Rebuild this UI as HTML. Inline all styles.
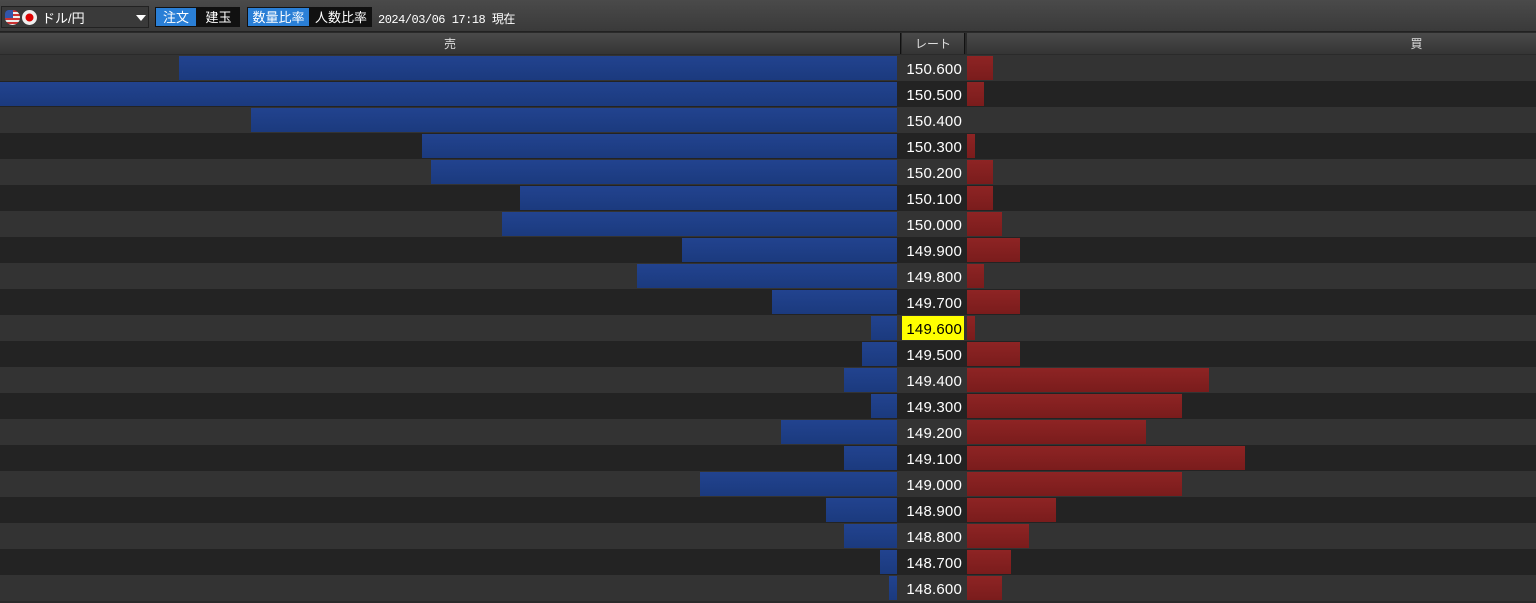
<!DOCTYPE html>
<html><head><meta charset="utf-8"><style>
*{margin:0;padding:0;box-sizing:border-box}
body{width:1536px;height:601px;background:#2a2a2a;font-family:"Liberation Sans","Noto Sans CJK JP",sans-serif;position:relative;overflow:hidden}
.tb{position:absolute;left:0;top:0;width:1536px;height:32px;background:linear-gradient(#4a4a4a,#3a3a3a);border-bottom:1px solid #222}
.sel{position:absolute;left:1px;top:6px;width:148px;height:22px;background:#3a3a3a;border:1px solid #222;color:#fff;font-size:13px}
.btn{position:absolute;top:7px;height:20px;font-size:13px;color:#fff;text-align:center;line-height:19px;border:1px solid #111}
.hd{position:absolute;top:33px;height:21px;background:linear-gradient(#4a4a4a,#353535);color:#ddd;font-size:12px;text-align:center;line-height:23px;border-right:1px solid #111}
.r{position:absolute;left:0;width:1536px;height:26px}
.a{background:#333}.b{background:#232323}
.s{position:absolute;top:1px;height:24px;background:linear-gradient(#22438f,#1b3a7e);}
.u{position:absolute;top:1px;height:24px;left:967px;background:linear-gradient(#8e2424,#7a1c1c)}
.p{position:absolute;left:902px;width:62px;top:1px;height:24px;text-align:right;padding-right:2px;color:#fff;font-size:15px;line-height:27px;letter-spacing:0.2px}
.y{background:#ffff00;color:#000}
</style></head><body>
<div class="tb">
<div class="sel"><span style="position:absolute;left:3px;top:3px;width:15px;height:15px;border-radius:50%;background:repeating-linear-gradient(#c33 0 2px,#eee 2px 4px)"></span><span style="position:absolute;left:3px;top:3px;width:8px;height:8px;border-radius:50% 0 0 0;background:#35a"></span><span style="position:absolute;left:20px;top:3px;width:15px;height:15px;border-radius:50%;background:radial-gradient(#d00 35%,#eee 40%)"></span><span style="position:absolute;left:40px;top:1px">ドル/円</span><span style="position:absolute;left:134px;top:8px;border:5px solid transparent;border-top:6px solid #fff"></span></div>
<div class="btn" style="left:155px;width:42px;background:#2a7fd6">注文</div>
<div class="btn" style="left:197px;width:43px;background:#111">建玉</div>
<div class="btn" style="left:247px;width:63px;background:#2a7fd6">数量比率</div>
<div class="btn" style="left:310px;width:62px;background:#111">人数比率</div>
<div style="position:absolute;left:378px;top:10px;color:#fff;font-size:12px;font-family:'Liberation Mono','Noto Sans CJK JP',monospace;letter-spacing:-0.5px">2024/03/06 17:18 現在</div>
</div>
<div class="hd" style="left:0;width:901px">売</div>
<div class="hd" style="left:902px;width:63px">レート</div>
<div class="hd" style="left:967px;width:569px;border-right:0;text-indent:330px">買</div>

<div class="r a" style="top:55px"><div class="s" style="left:179px;width:718px"></div><div class="p">150.600</div><div class="u" style="width:26px"></div></div>
<div class="r b" style="top:81px"><div class="s" style="left:0;width:897px"></div><div class="p">150.500</div><div class="u" style="width:17px"></div></div>
<div class="r a" style="top:107px"><div class="s" style="left:251px;width:646px"></div><div class="p">150.400</div></div>
<div class="r b" style="top:133px"><div class="s" style="left:422px;width:475px"></div><div class="p">150.300</div><div class="u" style="width:8px"></div></div>
<div class="r a" style="top:159px"><div class="s" style="left:431px;width:466px"></div><div class="p">150.200</div><div class="u" style="width:26px"></div></div>
<div class="r b" style="top:185px"><div class="s" style="left:520px;width:377px"></div><div class="p">150.100</div><div class="u" style="width:26px"></div></div>
<div class="r a" style="top:211px"><div class="s" style="left:502px;width:395px"></div><div class="p">150.000</div><div class="u" style="width:35px"></div></div>
<div class="r b" style="top:237px"><div class="s" style="left:682px;width:215px"></div><div class="p">149.900</div><div class="u" style="width:53px"></div></div>
<div class="r a" style="top:263px"><div class="s" style="left:637px;width:260px"></div><div class="p">149.800</div><div class="u" style="width:17px"></div></div>
<div class="r b" style="top:289px"><div class="s" style="left:772px;width:125px"></div><div class="p">149.700</div><div class="u" style="width:53px"></div></div>
<div class="r a" style="top:315px"><div class="s" style="left:871px;width:26px"></div><div class="p y">149.600</div><div class="u" style="width:8px"></div></div>
<div class="r b" style="top:341px"><div class="s" style="left:862px;width:35px"></div><div class="p">149.500</div><div class="u" style="width:53px"></div></div>
<div class="r a" style="top:367px"><div class="s" style="left:844px;width:53px"></div><div class="p">149.400</div><div class="u" style="width:242px"></div></div>
<div class="r b" style="top:393px"><div class="s" style="left:871px;width:26px"></div><div class="p">149.300</div><div class="u" style="width:215px"></div></div>
<div class="r a" style="top:419px"><div class="s" style="left:781px;width:116px"></div><div class="p">149.200</div><div class="u" style="width:179px"></div></div>
<div class="r b" style="top:445px"><div class="s" style="left:844px;width:53px"></div><div class="p">149.100</div><div class="u" style="width:278px"></div></div>
<div class="r a" style="top:471px"><div class="s" style="left:700px;width:197px"></div><div class="p">149.000</div><div class="u" style="width:215px"></div></div>
<div class="r b" style="top:497px"><div class="s" style="left:826px;width:71px"></div><div class="p">148.900</div><div class="u" style="width:89px"></div></div>
<div class="r a" style="top:523px"><div class="s" style="left:844px;width:53px"></div><div class="p">148.800</div><div class="u" style="width:62px"></div></div>
<div class="r b" style="top:549px"><div class="s" style="left:880px;width:17px"></div><div class="p">148.700</div><div class="u" style="width:44px"></div></div>
<div class="r a" style="top:575px"><div class="s" style="left:889px;width:8px"></div><div class="p">148.600</div><div class="u" style="width:35px"></div></div>
</body></html>
